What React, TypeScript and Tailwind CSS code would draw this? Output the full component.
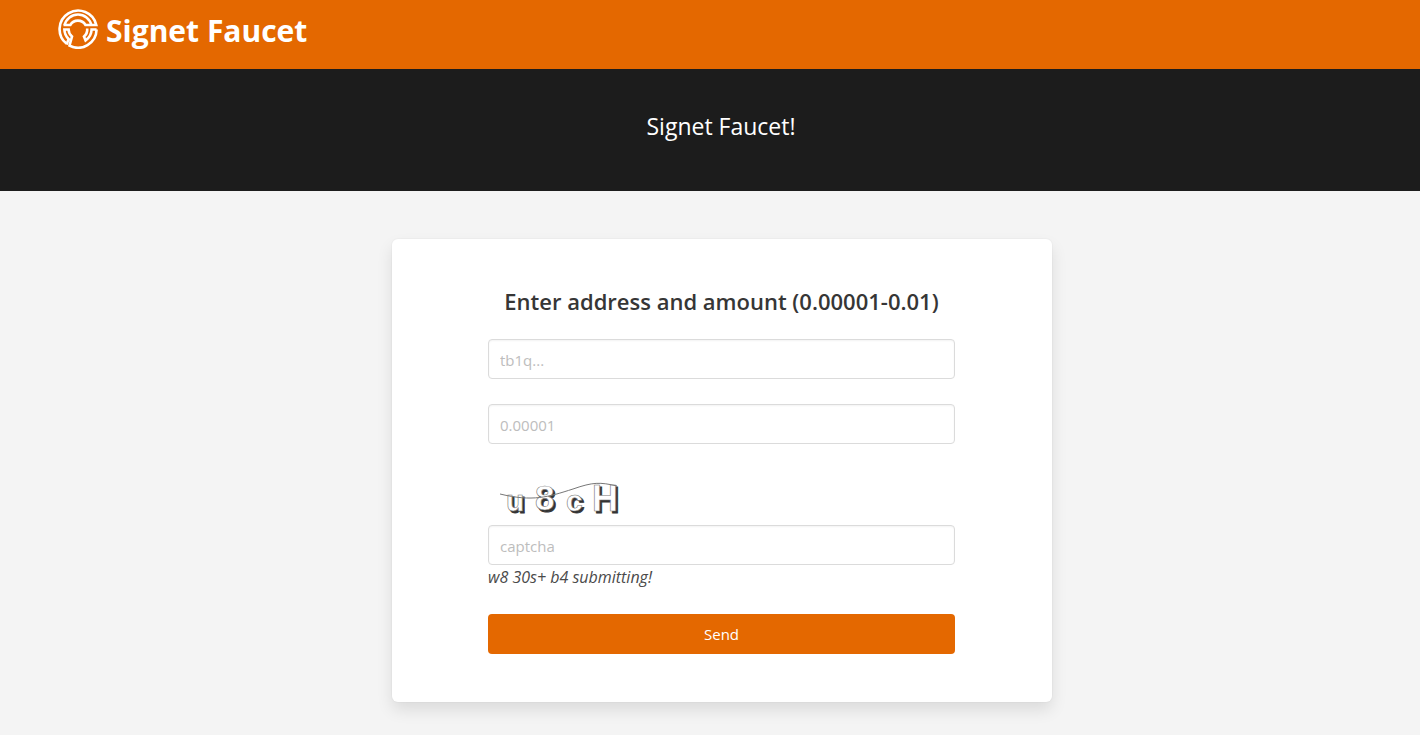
import React, { useState } from 'react';

const inputClass =
  'block w-full h-10 px-[11px] pt-[2px] rounded border border-[#dbdbdb] bg-white text-[15px] text-[#363636] placeholder:text-[#bdbdbd] shadow-[inset_0_1px_2px_rgba(10,10,10,0.05)] focus:outline-none focus:border-[#e46800]';

const Logo = () => (
  <svg className="w-10 h-10" viewBox="0 0 40 40" fill="none" stroke="#fff" strokeWidth="2.6" aria-hidden="true">
    <path d="M8.4 34.6 A18.6 18.6 0 1 1 38.3 16 H27.5 A8.8 8.8 0 0 0 12.3 16 H5.5" />
    <path d="M6.6 16 A13.8 13.8 0 0 1 33.4 16" />
    <path d="M38.6 20.5 A18.6 18.6 0 0 1 11.5 36.6 L14 27.5 A9.4 9.4 0 0 1 10.6 20.5 H6.4 A13.8 13.8 0 0 0 10.6 30 L8.6 35.6" />
    <path d="M38.6 20.5 H33.6 A13.8 13.8 0 0 1 27.6 31.4 L26 27.5 A9.4 9.4 0 0 0 29.2 19.5" />
  </svg>
);

// Captcha letters with an offset shadow, crossed by a noise line
const CaptchaImage = () => (
  <svg className="block w-[150px] h-[50px]" viewBox="0 0 150 50" role="img" aria-label="Captcha characters">
    <g fontFamily="Liberation Sans, sans-serif" fontWeight="700" fontSize="30">
      <g fill="#333" stroke="#333" strokeWidth="0.8">
        <text x="20" y="38">u</text>
        <text x="49" y="37" fontSize="35">8</text>
        <text x="80" y="38">c</text>
        <text x="106" y="38" fontSize="36">H</text>
      </g>
      <g fill="#fff" stroke="#777" strokeWidth="0.6">
        <text x="18" y="36">u</text>
        <text x="47" y="35" fontSize="35">8</text>
        <text x="78" y="36">c</text>
        <text x="104" y="36" fontSize="36">H</text>
      </g>
    </g>
    <path d="M12 19 C45 27 60 22 85 14 C105 7 112 7 129 11" fill="none" stroke="#777" strokeWidth="1" />
  </svg>
);

const App = () => {
  const [address, setAddress] = useState('');
  const [amount, setAmount] = useState('');
  const [captcha, setCaptcha] = useState('');

  const handleSubmit = (e: React.FormEvent) => {
    e.preventDefault();
  };

  return (
    <div className="min-h-screen bg-[#f4f4f4] font-['Open_Sans','Noto_Sans',sans-serif] text-base text-[#4a4a4a]">
      <header className="bg-[#e46800] pl-[58px] pr-6 pt-[9px] pb-4">
        <a href="/" className="flex items-start gap-2 text-white">
          <Logo />
          <h1 className="text-[30px] leading-[44px] font-bold">Signet Faucet</h1>
        </a>
      </header>

      <section className="bg-[#1c1c1c] pl-[22px] pt-10 pb-12 text-center">
        <p className="text-[23px] leading-[34px] text-white">Signet Faucet!</p>
      </section>

      <main className="pl-6 py-12">
        <div className="mx-auto max-w-[660px] rounded-md bg-white pl-24 pr-[97px] py-12 shadow-[0_8px_16px_rgba(10,10,10,0.1),0_0_0_1px_rgba(10,10,10,0.02)]">
          <form onSubmit={handleSubmit}>
            <h2 className="mb-6 text-center text-[22px] leading-7 font-semibold text-[#363636]">
              Enter address and amount (0.00001-0.01)
            </h2>
            <input
              className={inputClass}
              type="text"
              aria-label="Address"
              placeholder="tb1q..."
              value={address}
              onChange={(e) => setAddress(e.target.value)}
            />
            <input
              className={`${inputClass} mt-[25px]`}
              type="text"
              aria-label="Amount"
              placeholder="0.00001"
              value={amount}
              onChange={(e) => setAmount(e.target.value)}
            />
            <div className="mt-[31px]">
              <CaptchaImage />
            </div>
            <input
              className={inputClass}
              type="text"
              aria-label="Captcha"
              placeholder="captcha"
              value={captcha}
              onChange={(e) => setCaptcha(e.target.value)}
            />
            <p className="mb-[25px] leading-6 italic">w8 30s+ b4 submitting!</p>
            <button
              type="submit"
              className="block w-full h-10 rounded bg-[#e46800] text-[15px] text-white cursor-pointer"
            >
              Send
            </button>
          </form>
        </div>
      </main>
    </div>
  );
};

export default App;
